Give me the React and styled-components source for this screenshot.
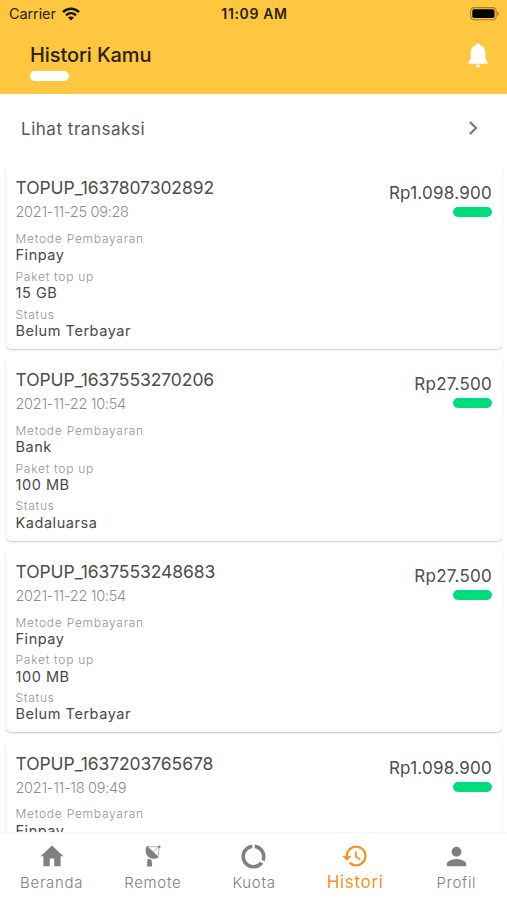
import React from "react";
import styled, { createGlobalStyle } from "styled-components";
import { MdChevronRight, MdDataUsage, MdHistory, MdPerson } from "react-icons/md";

const transactions = [
  {
    id: "TOPUP_1637807302892",
    date: "2021-11-25 09:28",
    method: "Finpay",
    packet: "15 GB",
    status: "Belum Terbayar",
    price: "Rp1.098.900",
  },
  {
    id: "TOPUP_1637553270206",
    date: "2021-11-22 10:54",
    method: "Bank",
    packet: "100 MB",
    status: "Kadaluarsa",
    price: "Rp27.500",
  },
  {
    id: "TOPUP_1637553248683",
    date: "2021-11-22 10:54",
    method: "Finpay",
    packet: "100 MB",
    status: "Belum Terbayar",
    price: "Rp27.500",
  },
  {
    id: "TOPUP_1637203765678",
    date: "2021-11-18 09:49",
    method: "Finpay",
    price: "Rp1.098.900",
  },
];

const WifiIcon = () => (
  <svg width="18" height="14" viewBox="0 0 18 14" fill="none" stroke="#17150c" strokeWidth="2.5">
    <path d="M1 5.1C5.6 0.7 12.4 0.7 17 5.1" />
    <path d="M4 8.3C6.9 5.6 11.1 5.6 14 8.3" />
    <path d="M9 13.6L6 10.6C7.7 9 10.3 9 12 10.6Z" fill="#17150c" stroke="none" />
  </svg>
);

const BatteryIcon = () => (
  <svg width="30" height="14" viewBox="0 0 30 14">
    <rect x="0.6" y="0.6" width="25.6" height="12.2" rx="3.6" fill="none" stroke="#a07e2d" strokeWidth="1.1" />
    <rect x="2.3" y="2.3" width="22.2" height="8.8" rx="1.8" fill="#000" />
    <path d="M27.4 4.8C29.5 5.5 29.5 8.3 27.4 9Z" fill="#a07e2d" />
  </svg>
);

const BellIcon = () => (
  <svg width="20" height="25" viewBox="0 0 20 25" fill="#fff">
    <path d="M10 0.2C11.2 0.2 12 1 12 2.1C15.4 3 17.3 5.8 17.3 9.4V15.6C17.3 17.2 19.7 18 19.7 20.2V20.8H0.3V20.2C0.3 18 2.7 17.2 2.7 15.6V9.4C2.7 5.8 4.6 3 8 2.1C8 1 8.8 0.2 10 0.2Z" />
    <path d="M7.6 21.8H12.4C12.2 23.5 11.3 24.4 10 24.4C8.7 24.4 7.8 23.5 7.6 21.8Z" />
  </svg>
);

const HomeIcon = () => (
  <svg width="24" height="22" viewBox="0 0 24 22" fill="currentColor">
    <path d="M12 0.4L23.4 11.2H20.6V21.2H14.2V13.6H9.8V21.2H3.4V11.2H0.6Z" />
  </svg>
);

const DishIcon = () => (
  <svg width="16" height="22" viewBox="0 0 16 22" fill="currentColor">
    <path d="M1.9 0.8C-0.6 5 0.6 10.3 4.2 12.5C7.2 14.3 11.4 14.2 13.8 12Z" />
    <path d="M2.6 13.6C3.8 14.2 5.2 14.6 6.6 14.7L7.2 21.4H1.8Z" />
    <path d="M3 1.9L14.4 1.5L13.2 10.9M8 7L14.4 1.5" fill="none" stroke="currentColor" strokeWidth="0.6" />
    <circle cx="14.4" cy="1.7" r="1.2" />
  </svg>
);

const tabs = [
  { name: "Beranda", icon: <HomeIcon /> },
  { name: "Remote", icon: <DishIcon /> },
  { name: "Kuota", icon: <MdDataUsage size={29} /> },
  { name: "Histori", icon: <MdHistory size={28} />, active: true },
  { name: "Profil", icon: <MdPerson size={29} /> },
];

function Transaction({ item }) {
  return (
    <Card>
      <Details>
        <h2>{item.id}</h2>
        <time>{item.date}</time>
        <Label>Metode Pembayaran</Label>
        <Value>{item.method}</Value>
        {item.packet && (
          <>
            <Label>Paket top up</Label>
            <Value>{item.packet}</Value>
          </>
        )}
        {item.status && (
          <>
            <Label>Status</Label>
            <Value>{item.status}</Value>
          </>
        )}
      </Details>
      <Amount>
        <Price>{item.price}</Price>
        <Pill $color="#00dc7d" />
      </Amount>
    </Card>
  );
}

function App() {
  return (
    <Screen>
      <GlobalStyle />
      <Header>
        <StatusBar>
          <Carrier>
            Carrier <WifiIcon />
          </Carrier>
          <Clock>11:09 AM</Clock>
          <Battery>
            <BatteryIcon />
          </Battery>
        </StatusBar>
        <TitleBar>
          <div>
            <h1>Histori Kamu</h1>
            <Pill $color="#fff" />
          </div>
          <BellIcon />
        </TitleBar>
      </Header>
      <LinkRow>
        <span>Lihat transaksi</span>
        <MdChevronRight size={28} color="#808080" />
      </LinkRow>
      <List>
        {transactions.map((item) => (
          <Transaction key={item.id} item={item} />
        ))}
      </List>
      <TabBar>
        {tabs.map((tab) => (
          <Tab key={tab.name} $active={tab.active}>
            <TabIcon>{tab.icon}</TabIcon>
            <span>{tab.name}</span>
          </Tab>
        ))}
      </TabBar>
    </Screen>
  );
}

const GlobalStyle = createGlobalStyle`
  * {
    box-sizing: border-box;
  }

  body {
    margin: 0;
    overflow: hidden;
    font-family: Inter, "Liberation Sans", sans-serif;
  }

  h1, h2 {
    margin: 0;
    font-weight: 400;
  }

  svg {
    display: block;
    flex-shrink: 0;
  }
`;

const Screen = styled.div`
  display: flex;
  flex-direction: column;
  height: 900px;
  background-color: #fff;
  white-space: nowrap;
`;

const Header = styled.header`
  height: 94px;
  flex-shrink: 0;
  background-color: #ffc640;
  color: #29230f;
`;

const StatusBar = styled.div`
  display: grid;
  grid-template-columns: 1fr auto 1fr;
  align-items: center;
  height: 27px;
  padding: 0 7px 0 9px;
`;

const Carrier = styled.div`
  display: flex;
  align-items: center;
  gap: 6px;
  font-size: 14.5px;
  letter-spacing: -0.1px;
`;

const Clock = styled.div`
  font-size: 14px;
  font-weight: 600;
  letter-spacing: 0.65px;
`;

const Battery = styled.div`
  justify-self: end;
`;

const TitleBar = styled.div`
  display: flex;
  justify-content: space-between;
  padding: 15px 19px 0 30px;

  h1 {
    height: 29px;
    font-size: 20px;
    font-weight: 500;
    line-height: 26px;
    letter-spacing: -0.1px;
  }

  svg {
    margin-top: 1px;
  }
`;

const Pill = styled.div`
  width: 39px;
  height: 10px;
  border-radius: 5px;
  background-color: ${(props) => props.$color};
`;

const LinkRow = styled.div`
  display: flex;
  align-items: center;
  justify-content: space-between;
  flex-shrink: 0;
  height: 71px;
  padding: 0 20px 3px 21px;
  font-size: 17px;
  letter-spacing: 0.53px;
  color: #555;

  span {
    padding-top: 2px;
  }
`;

const List = styled.main`
  display: flex;
  flex-direction: column;
  gap: 8px;
  flex: 1;
  min-height: 0;
  overflow: hidden;
  padding: 0 5px 0 6px;
`;

const Card = styled.section`
  display: flex;
  justify-content: space-between;
  flex-shrink: 0;
  height: 183.8px;
  padding: 10.4px 10px 0 9.5px;
  border-radius: 5px;
  background-color: #fff;
  box-shadow: 0 1px 2px rgba(0, 0, 0, 0.22);
`;

const Details = styled.div`
  display: flex;
  flex-direction: column;

  h2 {
    font-size: 17.5px;
    line-height: 26px;
    letter-spacing: -0.08px;
    color: #4c4c4c;
  }

  time {
    margin-bottom: 4.6px;
    font-size: 14.5px;
    font-weight: 300;
    line-height: 22px;
    letter-spacing: -0.28px;
    color: #8c8c8c;
  }
`;

const Label = styled.div`
  height: 19.2px;
  font-size: 12px;
  font-weight: 300;
  line-height: 21px;
  letter-spacing: 0.75px;
  color: #929292;
`;

const Value = styled.div`
  height: 18.6px;
  font-size: 14.5px;
  line-height: 16px;
  letter-spacing: 0.55px;
  color: #484848;
`;

const Amount = styled.div`
  display: flex;
  flex-direction: column;
  align-items: flex-end;
  padding-top: 4.3px;
`;

const Price = styled.div`
  height: 27px;
  font-size: 17px;
  line-height: 27px;
  letter-spacing: 0.25px;
  color: #4c4c4c;
`;

const TabBar = styled.nav`
  display: grid;
  grid-template-columns: repeat(5, 1fr);
  flex-shrink: 0;
  height: 68px;
  padding-left: 1px;
  border-top: 1px solid #f5f5f5;
  background-color: #fff;
`;

const Tab = styled.div`
  display: flex;
  flex-direction: column;
  align-items: center;
  padding-top: 8px;
  color: ${(props) => (props.$active ? "#f8931f" : "#808080")};

  span {
    font-size: ${(props) => (props.$active ? "17px" : "15px")};
    font-weight: ${(props) => (props.$active ? 400 : 300)};
    line-height: ${(props) => (props.$active ? "23px" : "24px")};
    letter-spacing: 0.7px;
  }
`;

const TabIcon = styled.div`
  display: flex;
  align-items: center;
  justify-content: center;
  height: 30px;
`;

export default App;
